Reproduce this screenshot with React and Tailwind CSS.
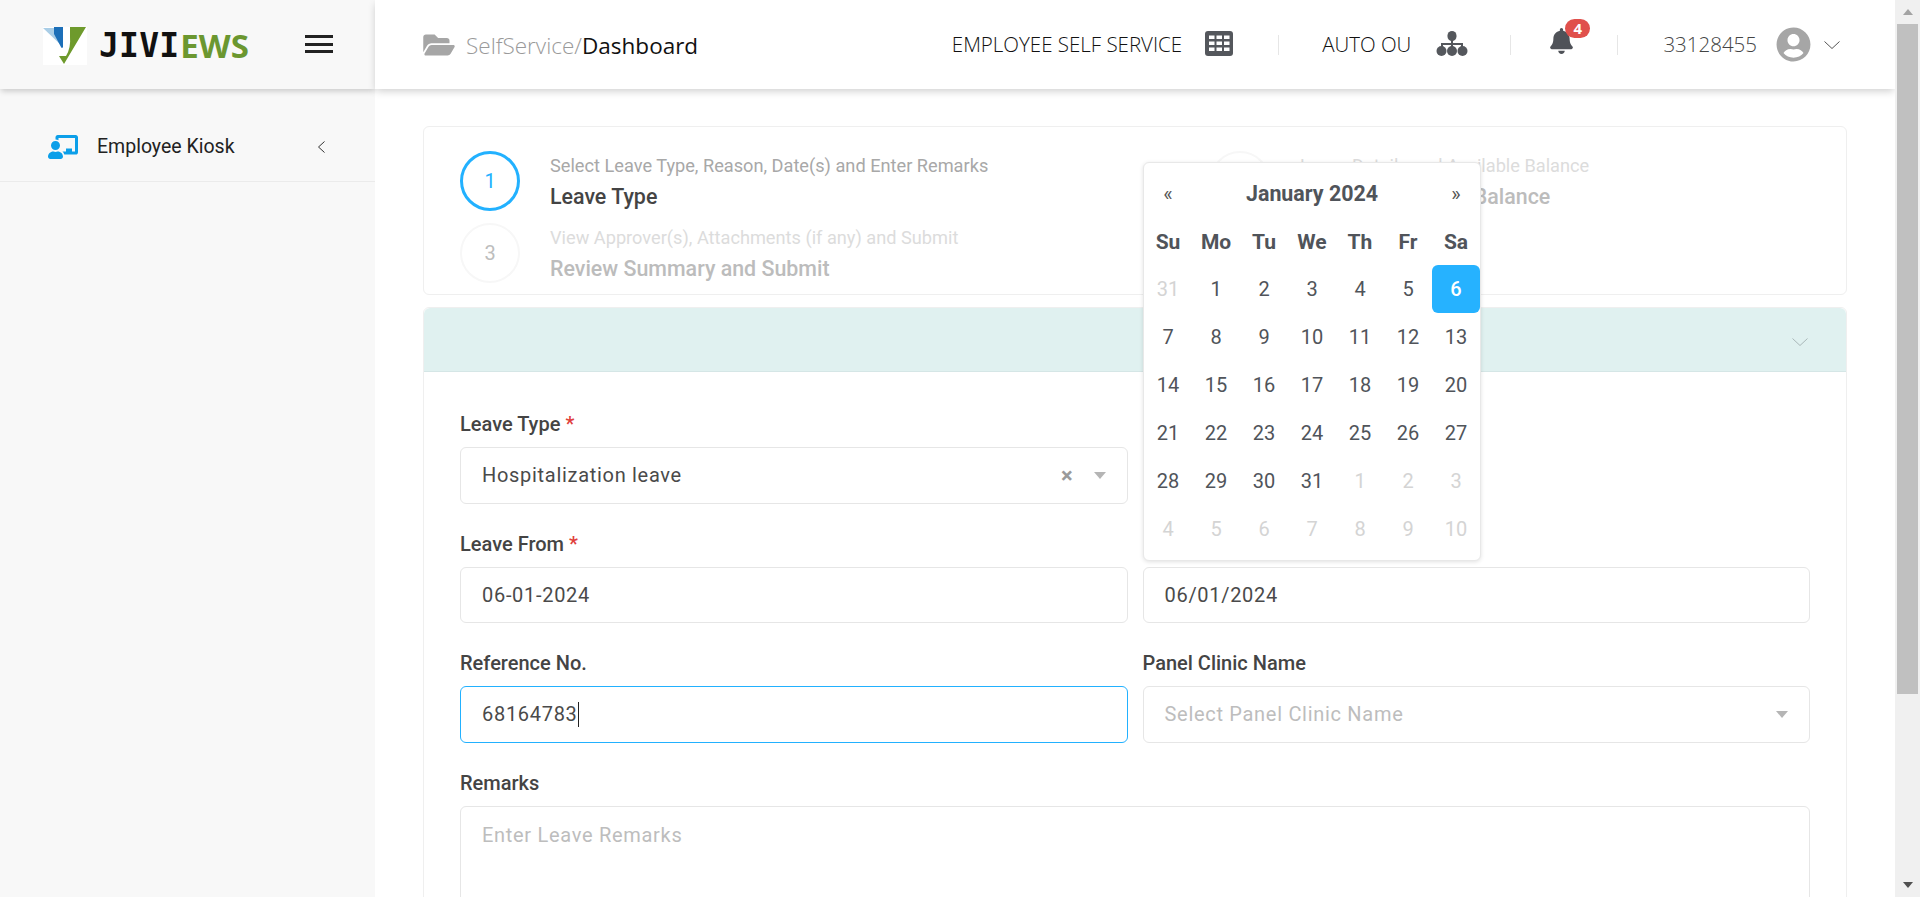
import React from 'react'
import { FaBell, FaChalkboardTeacher, FaFolderOpen, FaUserCircle } from 'react-icons/fa'

const roboto = "font-['Roboto',sans-serif]"
const openSans = "font-['Open_Sans',sans-serif]"

const Chevron = ({ className, box = '0 0 16 8', d = 'M0.5 0.5l7.5 7 7.5-7' }) => (
    <svg className={className} viewBox={box} fill="none" stroke="currentColor" strokeWidth="1">
        <path d={d} />
    </svg>
)

const Caret = ({ className }) => (
    <svg className={className} viewBox="0 0 12 7" fill="currentColor">
        <path d="M0 0h12L6 7z" />
    </svg>
)

const Logo = () => (
    <div className="flex items-center translate-y-[1px]">
        <svg className="w-[44px] h-[38px] bg-white" viewBox="0 0 44 38">
            <path d="M0 1h11l9 19z" fill="#a9cde6" />
            <path d="M11 0h9v20q-1 2-2 0l-7-13z" fill="#1c6fb8" />
            <path d="M27 0h16L21 37l-5-8h7q5-8 4-19z" fill="#6e9a2c" />
        </svg>
        <span className="ml-[12px] font-['DejaVu_Sans_Mono',monospace] font-bold text-[33px] leading-none text-[#111] tracking-[0.2px]">JIVI</span>
        <span className={`${openSans} ml-[1px] font-bold text-[33px] leading-none text-[#6b9730]`}>EWS</span>
    </div>
)

const GridIcon = () => (
    <svg className="w-[28px] h-[25px] -translate-y-[1px]" viewBox="0 0 28 25">
        <rect width="28" height="25" rx="3" fill="#54575c" />
        <g fill="#fff">
            <rect x="4" y="4.5" width="5.5" height="3.5" />
            <rect x="11.5" y="4.5" width="5.5" height="3.5" />
            <rect x="19" y="4.5" width="5.5" height="3.5" />
            <rect x="4" y="10.5" width="5.5" height="3.5" />
            <rect x="11.5" y="10.5" width="5.5" height="3.5" />
            <rect x="19" y="10.5" width="5.5" height="3.5" />
            <rect x="4" y="16.5" width="5.5" height="3.5" />
            <rect x="11.5" y="16.5" width="5.5" height="3.5" />
            <rect x="19" y="16.5" width="5.5" height="3.5" />
        </g>
    </svg>
)

const SitemapIcon = () => (
    <svg className="w-[32px] h-[25px] -translate-y-[1px]" viewBox="0 0 32 25" fill="#54575c">
        <rect x="11.5" y="0" width="9" height="10" rx="4.5" />
        <path d="M15 9h2v3h10v4h-2v-2h-8v2h-2v-2H7v2H5v-4h10z" />
        <circle cx="5.5" cy="20" r="5" />
        <circle cx="16" cy="20" r="5" />
        <circle cx="26.5" cy="20" r="5" />
    </svg>
)

const Divider = ({ className }) => <div className={`w-px h-[20px] bg-[#e6e6e6] ${className}`} />

const Step = ({ num, sub, title, active }) => (
    <div className="flex items-center h-[72px]">
        <div className={`w-[60px] h-[60px] shrink-0 rounded-full flex items-center justify-center text-[20px] ${active ? 'border-[3px] border-[#22b1ff] text-[#22b1ff]' : 'border-2 border-[#f7f7f7] text-[#bdbdbd]'}`}>
            {num}
        </div>
        <div className="ml-[30px]">
            <p className={`text-[18.2px] leading-[24px] ${active ? 'text-[#a8a8a8]' : 'text-[#dcdcdc]'}`}>{sub}</p>
            <p className={`mt-[7px] text-[21.4px] leading-[24px] font-medium ${active ? 'text-[#444]' : 'text-[#bcbcbc]'}`}>{title}</p>
        </div>
    </div>
)

const Label = ({ children, required }) => (
    <div className="h-[24px] mb-[11px] text-[20px] leading-[24px] font-medium text-[#444]">
        {children}
        {required && <span className="text-[#e0403c] ml-[5px]">*</span>}
    </div>
)

const boxClass = 'h-[56.5px] w-full rounded-[6px] border border-[#e6e6e6] px-[21px] text-[20px] tracking-[0.7px] text-[#4a4a4a] flex items-center bg-white'

const Calendar = () => {
    const days = [
        [31, 1, 2, 3, 4, 5, 6],
        [7, 8, 9, 10, 11, 12, 13],
        [14, 15, 16, 17, 18, 19, 20],
        [21, 22, 23, 24, 25, 26, 27],
        [28, 29, 30, 31, 1, 2, 3],
        [4, 5, 6, 7, 8, 9, 10],
    ]
    const isMuted = (r, d) => (r === 0 && d > 7) || (r >= 4 && d < 14)
    return (
        <div className="absolute left-[768px] top-[73px] z-10 w-[338px] h-[399px] bg-white border border-[#e8e8e8] rounded-[6px] shadow-[0_1px_4px_rgba(0,0,0,0.12)] pt-[7px] text-[#50545a] text-[20px]">
            <div className="grid grid-cols-7 h-[48px] items-center text-center">
                <span className="text-[#555]">«</span>
                <span className="col-span-5 text-[21.4px] font-bold">January 2024</span>
                <span className="text-[#555]">»</span>
            </div>
            <div className="grid grid-cols-7 text-center font-bold text-[21px]">
                {['Su', 'Mo', 'Tu', 'We', 'Th', 'Fr', 'Sa'].map((d) => (
                    <div key={d} className="h-[47px] leading-[48px]">{d}</div>
                ))}
            </div>
            <div className="grid grid-cols-7 text-center">
                {days.map((row, r) =>
                    row.map((d, i) => (
                        <div
                            key={`${r}-${i}`}
                            className={`h-[48px] leading-[48px] rounded-[6px] ${d === 6 && r === 0 ? 'bg-[#26b2ff] text-white font-medium' : isMuted(r, d) ? 'text-[#d4d4d4]' : ''}`}
                        >
                            {d}
                        </div>
                    ))
                )}
            </div>
        </div>
    )
}

const App = () => {
    return (
        <div className={`${roboto} h-screen w-full flex overflow-hidden bg-white`}>
            <aside className="w-[375px] shrink-0 bg-[#f8f8f8] flex flex-col">
                <div className="relative h-[89px] flex items-center pl-[43px] shadow-[0_3px_6px_-1px_rgba(0,0,0,0.2)]">
                    <Logo />
                    <div className="absolute left-[305px] top-[35px] w-[28px] h-[18px] flex flex-col justify-between">
                        <span className="h-[3px] bg-[#222]" />
                        <span className="h-[3px] bg-[#222]" />
                        <span className="h-[3px] bg-[#222]" />
                    </div>
                </div>
                <div className="mt-[23px] h-[70px] flex items-center pl-[48px] pr-[50px] border-b border-[#ebebeb]">
                    <FaChalkboardTeacher className="w-[30px] h-[24px] text-[#0c9fe9]" />
                    <span className="ml-[19px] text-[19.5px] text-[#222]">Employee Kiosk</span>
                    <Chevron className="ml-auto w-[7px] h-[12px] text-[#333]" box="0 0 7 12" d="M6.5 0.5L0.5 6l6 5.5" />
                </div>
            </aside>

            <div className="flex-1 min-w-0 flex flex-col">
                <header className={`${openSans} relative z-20 h-[89px] shrink-0 bg-white flex items-center pl-[48px] shadow-[0_3px_8px_-1px_rgba(0,0,0,0.2)]`}>
                    <FaFolderOpen className="w-[32px] h-[28px] text-[#a6a6a6]" />
                    <div className="ml-[11px] translate-y-[1px] text-[22.5px] font-light text-[#9a9a9a]">
                        SelfService/<span className="text-[#111] font-normal">Dashboard</span>
                    </div>
                    <span className="ml-auto text-[20.5px] font-light text-[#111]">EMPLOYEE SELF SERVICE</span>
                    <div className="ml-[23px]"><GridIcon /></div>
                    <Divider className="ml-[45px]" />
                    <span className="ml-[43px] text-[20.5px] font-light text-[#111]">AUTO OU</span>
                    <div className="ml-[25px]"><SitemapIcon /></div>
                    <Divider className="ml-[42px]" />
                    <div className="relative ml-[39px] mr-[4px] -translate-y-[4px]">
                        <FaBell className="w-[23px] h-[26px] text-[#4f5258]" />
                        <span className="absolute -top-[9px] left-[15px] w-[25px] h-[19px] rounded-full bg-[#e0504c] text-white text-[15px] font-bold leading-[19px] text-center">4</span>
                    </div>
                    <Divider className="ml-[40px]" />
                    <span className="ml-[45px] text-[20.5px] font-light text-[#444]">33128455</span>
                    <FaUserCircle className="ml-[19px] w-[35px] h-[35px] text-[#a6a6a6]" />
                    <Chevron className="ml-[13px] mr-[55px] w-[16px] h-[8px] text-[#555]" />
                </header>

                <main className="relative flex-1 min-h-0 overflow-hidden px-[48px] pt-[37px]">
                    <section className="h-[169px] border border-[#efefef] rounded-[6px] pl-[36px] pt-[18px]">
                        <div className="grid grid-cols-[750px_1fr]">
                            <Step active num="1" sub="Select Leave Type, Reason, Date(s) and Enter Remarks" title="Leave Type" />
                            <Step num="2" sub="Leave Details and Available Balance" title="Leave Details and Balance" />
                            <Step num="3" sub="View Approver(s), Attachments (if any) and Submit" title="Review Summary and Submit" />
                        </div>
                    </section>

                    <section className="mt-[12px] border border-[#efefef] rounded-t-[6px]">
                        <div className="h-[64px] bg-[#e0f1f0] border-b border-[#d5e6e6] rounded-t-[6px] flex items-center justify-end pr-[38px]">
                            <Chevron className="w-[16px] h-[8px] mt-[4px] text-[#a9b8b8]" />
                        </div>
                        <div className="px-[36px] pt-[40px] grid grid-cols-2 gap-x-[15px] gap-y-[28px]">
                            <div>
                                <Label required>Leave Type</Label>
                                <div className={boxClass}>
                                    <span>Hospitalization leave</span>
                                    <span className="ml-auto text-[#9a9a9a] text-[22px] font-bold">×</span>
                                    <Caret className="ml-[20px] w-[12px] h-[7px] text-[#b5b5b5]" />
                                </div>
                            </div>
                            <div />
                            <div>
                                <Label required>Leave From</Label>
                                <div className={boxClass}>06-01-2024</div>
                            </div>
                            <div>
                                <Label>Leave To</Label>
                                <div className={boxClass}>06/01/2024</div>
                            </div>
                            <div>
                                <Label>Reference No.</Label>
                                <div className={`${boxClass} !border-[#22b1ff]`}>
                                    68164783
                                    <span className="w-px h-[25px] bg-[#222]" />
                                </div>
                            </div>
                            <div>
                                <Label>Panel Clinic Name</Label>
                                <div className={boxClass}>
                                    <span className="text-[#bdbdbd]">Select Panel Clinic Name</span>
                                    <Caret className="ml-auto w-[12px] h-[7px] text-[#b5b5b5]" />
                                </div>
                            </div>
                            <div className="col-span-2">
                                <Label>Remarks</Label>
                                <div className="h-[150px] rounded-[6px] border border-[#e6e6e6] px-[21px] pt-[13px] text-[20px] tracking-[0.7px] text-[#bdbdbd]">
                                    Enter Leave Remarks
                                </div>
                            </div>
                        </div>
                    </section>

                    <Calendar />
                </main>
            </div>

            <div className="w-[25px] shrink-0 bg-[#f0f0f0] flex flex-col items-center relative z-30">
                <div className="h-[24px] flex items-center justify-center">
                    <Caret className="w-[10px] h-[6px] text-[#a3a3a3] rotate-180" />
                </div>
                <div className="w-[21px] h-[670px] bg-[#c0c0c0]" />
                <div className="mt-auto h-[24px] flex items-center justify-center">
                    <Caret className="w-[10px] h-[6px] text-[#505050]" />
                </div>
            </div>
        </div>
    )
}

export default App
